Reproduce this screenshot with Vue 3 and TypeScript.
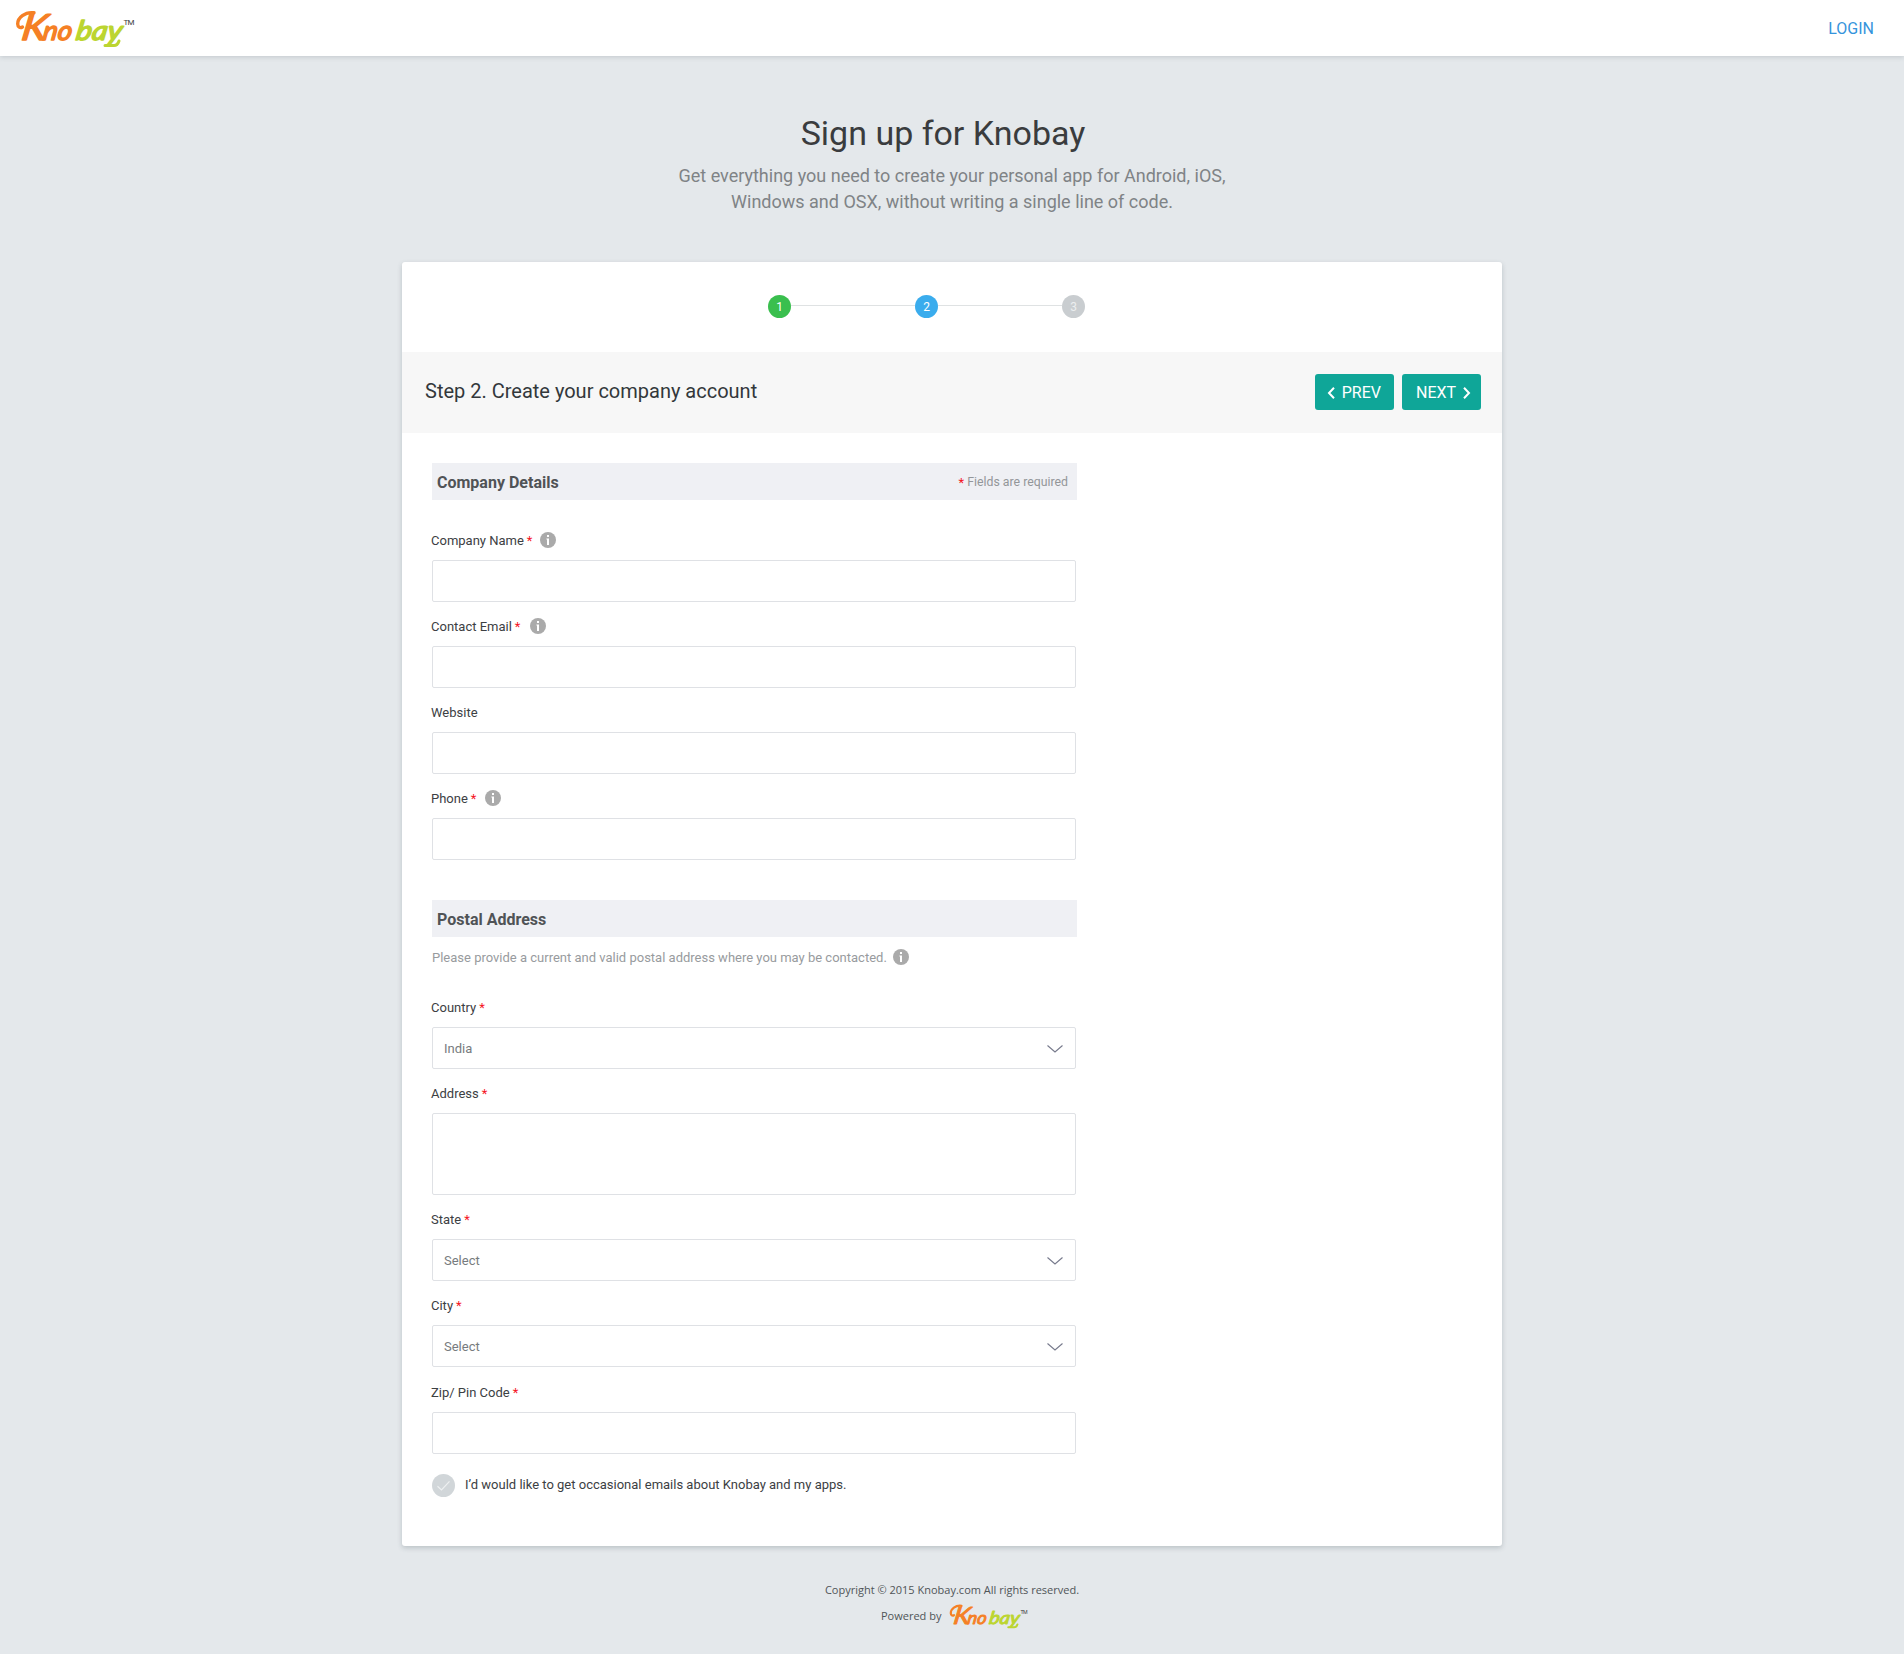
<script setup lang="ts">
import { defineComponent, h } from 'vue'

interface Field {
  label: string
  kind: 'input' | 'select' | 'area'
  required?: boolean
  infoGap?: number
  value?: string
  extra?: number
}

const steps = [
  { n: 1, state: 'done' },
  { n: 2, state: 'active' },
  { n: 3, state: 'todo' },
]

const company: Field[] = [
  { label: 'Company Name', kind: 'input', required: true, infoGap: 8 },
  { label: 'Contact Email', kind: 'input', required: true, infoGap: 10 },
  { label: 'Website', kind: 'input' },
  { label: 'Phone', kind: 'input', required: true, infoGap: 9 },
]

const postal: Field[] = [
  { label: 'Country', kind: 'select', required: true, value: 'India' },
  { label: 'Address', kind: 'area', required: true },
  { label: 'State', kind: 'select', required: true, value: 'Select' },
  { label: 'City', kind: 'select', required: true, value: 'Select' },
  { label: 'Zip/ Pin Code', kind: 'input', required: true, extra: 1 },
]

const sections = [
  { title: 'Company Details', fields: company, note: true, hint: '' },
  {
    title: 'Postal Address',
    fields: postal,
    note: false,
    hint: 'Please provide a current and valid postal address where you may be contacted.',
  },
]

const InfoIcon = defineComponent({
  props: { gap: { type: Number, default: 0 } },
  setup: (p) => () =>
    h('svg', { width: 16, height: 16, viewBox: '0 0 16 16', style: { marginLeft: p.gap + 'px', flex: 'none' } }, [
      h('circle', { cx: 8, cy: 8, r: 8, fill: '#aaaaaa' }),
      h('path', { d: 'M7 3h2v2H7zM6.4 6.4H9V13H7V7.4h-.6z', fill: '#fff' }),
    ]),
})

const KnobayLogo = defineComponent({
  props: { width: { type: Number, default: 120 } },
  setup: (p) => () =>
    h('svg', { width: p.width, height: p.width * 0.3, viewBox: '0 0 120 36', style: { display: 'block', overflow: 'visible' } }, [
      h('path', {
        d: 'M19 2.800C10 1.500 2.500 8 2.700 14C2.800 17 5 18.500 7.500 17',
        fill: 'none', stroke: '#f58025', 'stroke-width': 3.4, 'stroke-linecap': 'round',
      }),
      h('g', { 'font-family': 'Lato, sans-serif', 'font-style': 'italic', 'stroke-width': 1.5, 'stroke-linejoin': 'round', transform: 'translate(0 30) skewX(-9)' }, [
        h('text', { x: 5.5, y: 0, 'font-size': 36, fill: '#f58025', stroke: '#f58025', textLength: 25, lengthAdjust: 'spacingAndGlyphs' }, 'K'),
        h('text', { x: 27, y: 0, 'font-size': 27, fill: '#f58025', stroke: '#f58025', textLength: 29, lengthAdjust: 'spacingAndGlyphs' }, 'no'),
        h('text', { x: 60, y: 0, 'font-size': 27, fill: '#bcd530', stroke: '#bcd530', textLength: 46, lengthAdjust: 'spacingAndGlyphs' }, 'bay'),
      ]),
      h('path', {
        d: 'M90 35.500H99C101 35.500 103 34 104 31',
        fill: 'none', stroke: '#bcd530', 'stroke-width': 3, 'stroke-linecap': 'round',
      }),
      h('text', { x: 108.5, y: 15, 'font-family': 'Roboto, sans-serif', 'font-size': 8, fill: '#3c3c3c', textLength: 11 }, 'TM'),
    ]),
})
</script>

<template>
  <div class="page">
    <header class="topbar">
      <KnobayLogo :width="120" />
      <a class="login">LOGIN</a>
    </header>

    <section class="intro">
      <h1>Sign up for Knobay</h1>
      <p>Get everything you need to create your personal app for Android, iOS,<br />Windows and OSX, without writing a single line of code.</p>
    </section>

    <main class="card">
      <div class="steps">
        <template v-for="(s, i) in steps" :key="s.n">
          <span v-if="i" class="line"></span>
          <span class="dot" :class="s.state">{{ s.n }}</span>
        </template>
      </div>

      <div class="stepbar">
        <h2>Step 2. Create your company account</h2>
        <div class="nav">
          <button class="btn prev">
            <svg width="8" height="12" viewBox="0 0 8 12"><path d="M7 .8 2 6l5 5.200" /></svg>
            <span>PREV</span>
          </button>
          <button class="btn next">
            <span>NEXT</span>
            <svg width="8" height="12" viewBox="0 0 8 12"><path d="M1 .8 6 6l-5 5.200" /></svg>
          </button>
        </div>
      </div>

      <form class="form" @submit.prevent>
        <section v-for="sec in sections" :key="sec.title" class="group">
          <div class="group-head">
            <h3>{{ sec.title }}</h3>
            <span v-if="sec.note" class="note"><b class="star">*</b>Fields are required</span>
          </div>
          <p v-if="sec.hint" class="hint">{{ sec.hint }}<InfoIcon :gap="6" /></p>
          <div class="fields">
            <div v-for="f in sec.fields" :key="f.label" class="field">
              <label :class="{ late: f.extra }">
                {{ f.label }}<b v-if="f.required" class="star">*</b>
                <InfoIcon v-if="f.infoGap" :gap="f.infoGap" />
              </label>
              <input v-if="f.kind === 'input'" class="control" type="text" />
              <textarea v-else-if="f.kind === 'area'" class="control area"></textarea>
              <div v-else class="control select">
                <span>{{ f.value }}</span>
                <svg width="16" height="8" viewBox="0 0 16 8"><path d="M.5.5 8 7 15.500.5" /></svg>
              </div>
            </div>
          </div>
        </section>

        <div class="agree">
          <svg width="23" height="23" viewBox="0 0 23 23">
            <circle cx="11.5" cy="11.5" r="11.5" fill="#d1d6d9" />
            <path d="M5.500 12.200l4 3.800 8-8.700" fill="none" stroke="#eef0f1" stroke-width="1.2" />
          </svg>
          <span>I’d would like to get occasional emails about Knobay and my apps.</span>
        </div>
      </form>
    </main>

    <footer class="footer">
      <div class="copy">Copyright © 2015 Knobay.com All rights reserved.</div>
      <div class="powered"><span>Powered by</span><KnobayLogo :width="79" /></div>
    </footer>
  </div>
</template>

<style>
body {
  background: #e4e8eb;
}
</style>

<style scoped>
.page {
  height: 1654px;
  overflow: hidden;
  background: #e4e8eb;
  color: #3c4043;
  font-family: Roboto, sans-serif;
}
.page * {
  box-sizing: border-box;
}
h1, h2, h3, p {
  margin: 0;
  font-weight: 400;
}
.topbar {
  height: 56px;
  padding: 0 30px 0 15px;
  display: flex;
  align-items: center;
  justify-content: space-between;
  background: #fff;
  box-shadow: 0 1px 5px rgba(60, 75, 85, 0.2);
}
.login {
  color: #3594dc;
  font-size: 16px;
}
.intro {
  height: 206px;
  padding-top: 56px;
  text-align: center;
}
.intro h1 {
  margin-right: 18px;
  font-size: 34px;
  line-height: 42px;
  color: #3a3c3e;
}
.intro p {
  margin-top: 9px;
  font-size: 18px;
  line-height: 26px;
  color: #7f8386;
}
.card {
  width: 1100px;
  height: 1284px;
  margin: 0 auto;
  background: #fff;
  border-radius: 3px;
  box-shadow: 0 2px 5px rgba(60, 75, 85, 0.24);
}
.steps {
  height: 90px;
  padding: 33px 51px 0 0;
  display: flex;
  justify-content: center;
  align-items: flex-start;
}
.line {
  width: 124px;
  height: 1px;
  margin-top: 10px;
  background: #dfe2e3;
}
.dot {
  width: 23px;
  height: 23px;
  border-radius: 50%;
  color: #fff;
  font-size: 12px;
  line-height: 24px;
  text-align: center;
}
.dot.done {
  background: #3abf4e;
}
.dot.active {
  background: #3aaced;
}
.dot.todo {
  background: #c9cdd0;
  color: #eceeef;
}
.stepbar {
  height: 81px;
  padding: 0 21px 0 23px;
  display: flex;
  align-items: center;
  justify-content: space-between;
  background: #f7f7f7;
}
.stepbar h2 {
  padding-bottom: 3px;
  font-size: 20px;
  line-height: 24px;
  color: #33383b;
}
.nav {
  padding-bottom: 1px;
  display: flex;
  gap: 8px;
}
.btn {
  width: 79px;
  height: 36px;
  padding: 1px 13px 0 12px;
  display: flex;
  align-items: center;
  justify-content: space-between;
  border: 0;
  border-radius: 3px;
  background: #0fa698;
  color: #fff;
  font: 16px Roboto, sans-serif;
}
.btn.next {
  padding: 1px 10px 0 14px;
}
.btn path {
  fill: none;
  stroke: #fff;
  stroke-width: 2;
}
.form {
  width: 675px;
  padding: 30px 0 0 30px;
}
.group + .group {
  margin-top: 40px;
}
.group-head {
  height: 37px;
  padding: 0 9px 0 5px;
  display: flex;
  align-items: center;
  justify-content: space-between;
  background: #eff0f4;
}
.group-head h3 {
  padding-top: 2px;
  font-size: 16px;
  font-weight: 700;
  color: #505356;
}
.note {
  display: flex;
  align-items: center;
  padding-top: 1px;
  font-size: 12.3px;
  color: #939699;
}
.star {
  margin-left: 3px;
  font-weight: 400;
  color: #f5141e;
}
.note .star {
  margin: 0 3px 0 0;
  font-size: 13px;
}
.hint {
  height: 30px;
  padding-top: 10px;
  display: flex;
  align-items: center;
  font-size: 13px;
  color: #989b9e;
}
.fields {
  padding-top: 16px;
}
.field {
  width: 644px;
}
label {
  height: 44px;
  margin-left: -1px;
  padding: 10px 0 6px;
  display: flex;
  align-items: center;
  font-size: 13px;
  white-space: pre;
}
label.late {
  height: 45px;
  padding-top: 11px;
}
.control {
  width: 644px;
  height: 42px;
  display: block;
  margin: 0;
  padding: 0 11px;
  border: 1px solid #dfe1e5;
  border-radius: 2px;
  background: #fff;
  outline: none;
  resize: none;
  color: #777b7e;
  font: 13px Roboto, sans-serif;
}
.area {
  height: 82px;
}
.select {
  padding-right: 12.5px;
  display: flex;
  align-items: center;
  justify-content: space-between;
}
.select svg {
  margin-top: 2px;
}
.select path {
  fill: none;
  stroke: #777a8c;
  stroke-width: 1.1;
}
.agree {
  margin-top: 20px;
  display: flex;
  align-items: center;
  gap: 10px;
  font-size: 13px;
}
.agree span {
  padding-bottom: 2px;
}
.footer {
  padding-top: 36px;
  font: 11px "Open Sans", sans-serif;
  color: #505558;
}
.copy {
  text-align: center;
  line-height: 16px;
}
.powered {
  margin: 5px 0 0 881px;
  display: flex;
  align-items: center;
  gap: 8px;
}
.powered svg {
  margin-top: 1px;
}
</style>
